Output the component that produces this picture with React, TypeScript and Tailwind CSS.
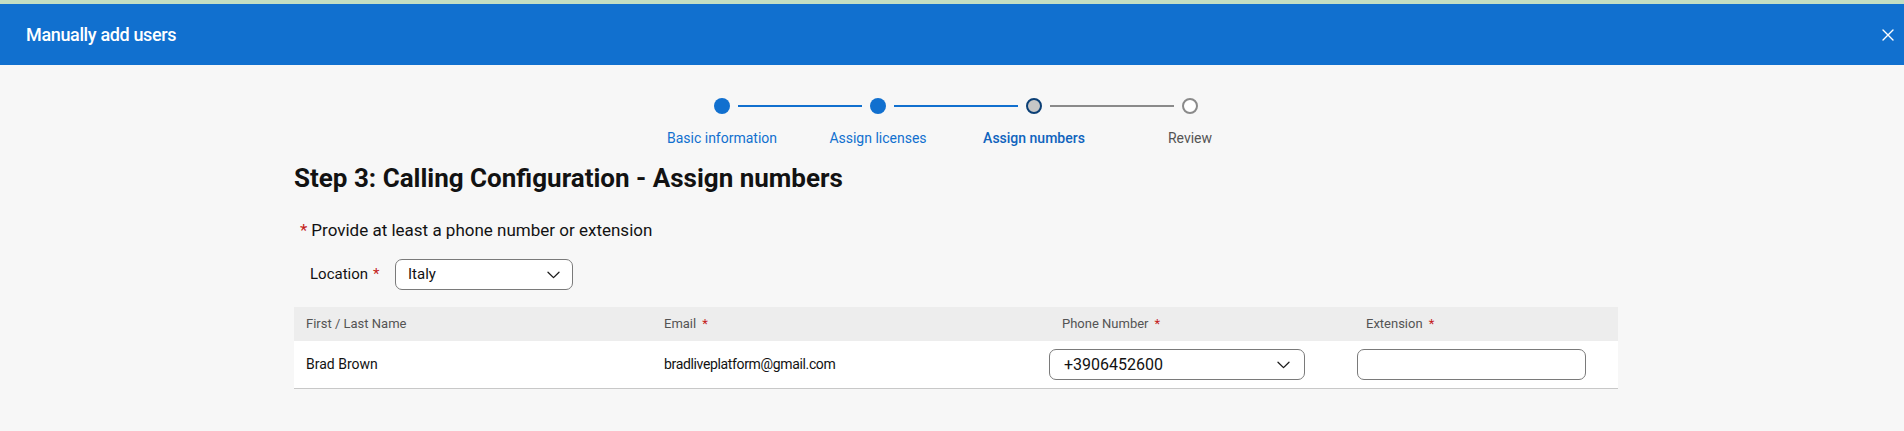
import React from "react";

const Chevron = () => (
  <svg width="13" height="8" viewBox="0 0 13 8" fill="none">
    <path d="M1 1.2 L6.5 6.6 L12 1.2" stroke="#1c1c1c" strokeWidth="1.3" strokeLinecap="round" strokeLinejoin="round" />
  </svg>
);

type Step = { label: string; state: "done" | "current" | "todo" };
const steps: Step[] = [
  { label: "Basic information", state: "done" },
  { label: "Assign licenses", state: "done" },
  { label: "Assign numbers", state: "current" },
  { label: "Review", state: "todo" },
];

function Circle({ state }: { state: Step["state"] }) {
  if (state === "done") return <div className="w-[16px] h-[16px] rounded-full bg-[#1170cf] shrink-0" />;
  if (state === "current")
    return <div className="w-[16px] h-[16px] rounded-full bg-[#c6c6c6] border-2 border-[#0b3f75] shrink-0" />;
  return <div className="w-[16px] h-[16px] rounded-full bg-white border-2 border-[#8a8a8a] shrink-0" />;
}

function Stepper() {
  return (
    <div className="flex justify-center">
      {steps.map((s, i) => {
        const leftColor = i === 0 ? "bg-transparent" : i <= 2 ? "bg-[#1170cf]" : "bg-[#8a8a8a]";
        const rightColor = i === 3 ? "bg-transparent" : i <= 1 ? "bg-[#1170cf]" : "bg-[#8a8a8a]";
        const labelCls =
          s.state === "current"
            ? "text-[#0f63bd] font-medium"
            : s.state === "done"
            ? "text-[#1170cf]"
            : "text-[#545454]";
        return (
          <div key={s.label} className="w-[156px] flex flex-col items-center">
            <div className="w-full flex items-center h-[16px]">
              <div className={`flex-1 h-[2px] mr-[8px] ${leftColor}`} />
              <Circle state={s.state} />
              <div className={`flex-1 h-[2px] ml-[8px] ${rightColor}`} />
            </div>
            <div className={`mt-[14px] text-[14px] leading-[20px] whitespace-nowrap ${labelCls}`}>{s.label}</div>
          </div>
        );
      })}
    </div>
  );
}

const Req = () => <span className="text-[#c41c1c] ml-[6px]">*</span>;

export default function App() {
  return (
    <div className="w-full h-[431px] bg-[#f7f7f7] overflow-hidden" style={{ fontFamily: "Roboto, 'Noto Sans', sans-serif" }}>
      <div className="h-[4px] bg-[#c4dec3]" />
      <div className="h-[61px] bg-[#1170cf] flex items-center justify-between pl-[26px] pr-[10px]">
        <div className="text-white text-[18px] font-medium tracking-[-0.02em]">Manually add users</div>
        <svg width="12" height="12" viewBox="0 0 12 12">
          <path d="M1 1 L11 11 M11 1 L1 11" stroke="white" strokeWidth="1.4" strokeLinecap="round" />
        </svg>
      </div>

      <div className="flex justify-center pl-[8px]">
        <div className="w-[1324px] pt-[33px]">
          <Stepper />

          <h1 className="mt-[15px] text-[26px] leading-[30px] font-bold text-[#121212]">
            Step 3: Calling Configuration - Assign numbers
          </h1>

          <div className="mt-[25px] pl-[6px] text-[17px] leading-[24px] text-[#121212] flex">
            <span className="text-[#c41c1c] mr-[4px]">*</span>
            <span>Provide at least a phone number or extension</span>
          </div>

          <div className="mt-[17px] pl-[16px] flex items-center">
            <div className="text-[15px] text-[#121212] w-[85px]">
              Location<span className="text-[#c41c1c] ml-[5px]">*</span>
            </div>
            <div className="w-[178px] h-[31px] border border-[#7a7a7a] rounded-[7px] bg-white flex items-center justify-between pl-[12px] pr-[12px]">
              <span className="text-[15px] text-[#121212]">Italy</span>
              <Chevron />
            </div>
          </div>

          <div className="mt-[17px]">
            <div className="grid grid-cols-[358px_397px_307px_262px] h-[34px] bg-[#ededed] items-center text-[13px] text-[#545454]">
              <div className="pl-[12px]">First / Last Name</div>
              <div className="pl-[12px]">
                Email<Req />
              </div>
              <div className="pl-[13px]">
                Phone Number<Req />
              </div>
              <div className="pl-[10px]">
                Extension<Req />
              </div>
            </div>
            <div className="grid grid-cols-[358px_397px_307px_262px] h-[48px] bg-white border-b border-[#c8c8c8] items-center text-[14px] text-[#121212]">
              <div className="pl-[12px]">Brad Brown</div>
              <div className="pl-[12px] tracking-[-0.025em]">bradliveplatform@gmail.com</div>
              <div>
                <div className="w-[256px] h-[31px] border border-[#7a7a7a] rounded-[7px] bg-white flex items-center justify-between pl-[14px] pr-[14px]">
                  <span className="text-[16px] text-[#121212]">+3906452600</span>
                  <Chevron />
                </div>
              </div>
              <div className="pl-[1px]">
                <div className="w-[229px] h-[31px] border border-[#7a7a7a] rounded-[7px] bg-white" />
              </div>
            </div>
          </div>
        </div>
      </div>
    </div>
  );
}
